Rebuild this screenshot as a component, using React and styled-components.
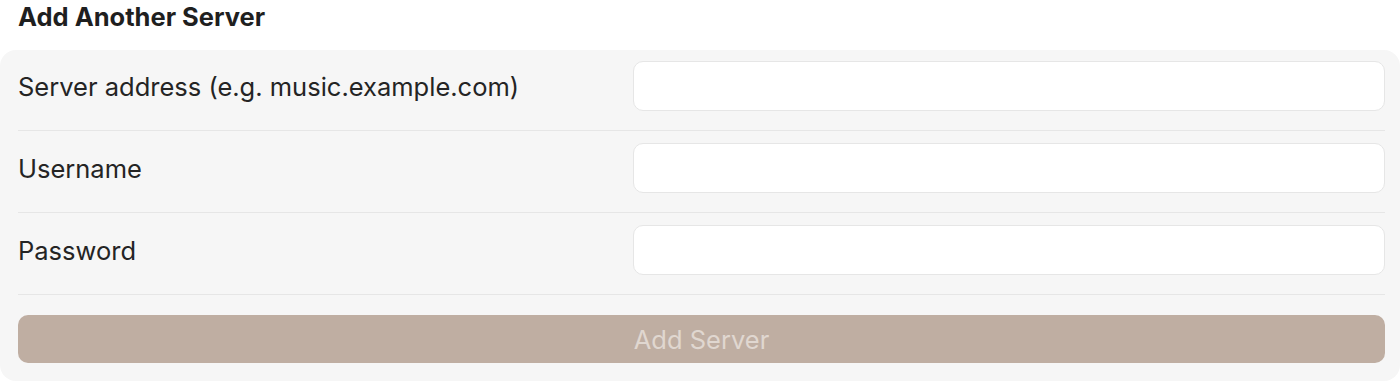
import styled, { createGlobalStyle } from "styled-components"

const GlobalStyle = createGlobalStyle`
    html, body {
        margin: 0;
        padding: 0;
        background: #ffffff;
        font-family: Inter, "Liberation Sans", sans-serif;
        color: #222222;
    }
`

const Page = styled.div`
    width: 1400px;
    height: 381px;
    overflow: hidden;
`

const Heading = styled.h2`
    margin: 0;
    padding: 2px 18px 0;
    height: 48px;
    font-size: 25.5px;
    font-weight: 700;
    line-height: 30px;
    color: #1f1f1f;
`

const Panel = styled.div`
    background-color: #f6f6f6;
    border-radius: 16px;
    padding: 0 15px 18px 18px;
    height: 331px;
    box-sizing: border-box;
`

const Row = styled.div`
    display: grid;
    grid-template-columns: 45% 55%;
    align-items: center;
    padding: ${props => props.first ? "11px" : "12px"} 0 19px;
    border-bottom: 1px solid #e6e6e6;
`

const Label = styled.label`
    font-size: 25.5px;
    color: #242424;
    line-height: 30px;
    padding-top: 2px;
`

const Field = styled.input`
    height: 50px;
    box-sizing: border-box;
    border: 1px solid #e6e6e6;
    border-radius: 10px;
    background: #ffffff;
    outline: none;
    padding: 0 14px;
    font-size: 22px;
    font-family: inherit;
`

const Button = styled.button`
    display: block;
    width: 100%;
    margin-top: 20px;
    height: 48px;
    border: none;
    border-radius: 10px;
    background-color: #bfaea2;
    color: #e0d7d0;
    font-family: inherit;
    font-size: 25.5px;
    cursor: default;
`

const fields = [
    { id: "address", label: "Server address (e.g. music.example.com)", type: "text" },
    { id: "username", label: "Username", type: "text" },
    { id: "password", label: "Password", type: "password" },
]

const App = () => {
    return (
        <>
            <GlobalStyle />
            <Page>
                <Heading>Add Another Server</Heading>
                <Panel>
                    {fields.map((f, i) => (
                        <Row key={f.id} first={i === 0}>
                            <Label htmlFor={f.id}>{f.label}</Label>
                            <Field id={f.id} type={f.type} />
                        </Row>
                    ))}
                    <Button disabled>Add Server</Button>
                </Panel>
            </Page>
        </>
    )
}

export default App
